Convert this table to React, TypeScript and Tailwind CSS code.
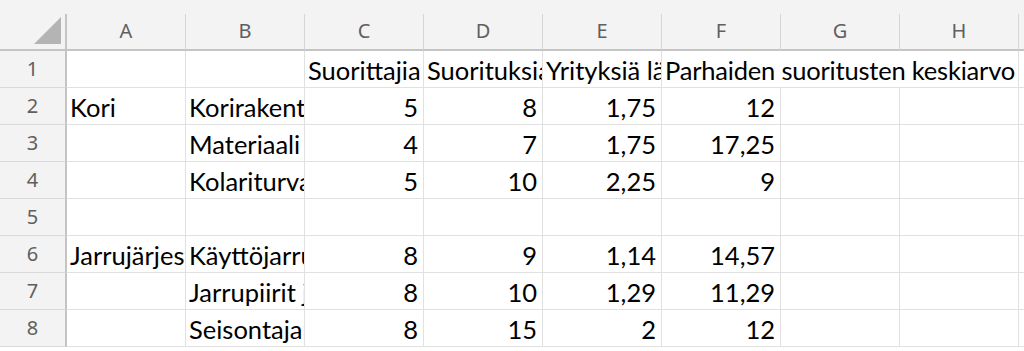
import React from "react";

type Cell = string | number;

const columns = ["A", "B", "C", "D", "E", "F", "G", "H"];

// Sheet contents, one array per row (columns A..F)
const rows: Cell[][] = [
  ["", "", "Suorittajia", "Suorituksia", "Yrityksiä läpäisyyn", "Parhaiden suoritusten keskiarvo"],
  ["Kori", "Korirakenteet", 5, 8, "1,75", 12],
  ["", "Materiaali ja pinnoitteet", 4, 7, "1,75", "17,25"],
  ["", "Kolariturvallisuus", 5, 10, "2,25", 9],
  [],
  ["Jarrujärjestelmät", "Käyttöjarrut", 8, 9, "1,14", "14,57"],
  ["", "Jarrupiirit ja jarruputket", 8, 10, "1,29", "11,29"],
  ["", "Seisontajarru", 8, 15, "2", 12],
];

const isNumeric = (v: Cell) => typeof v === "number" || /^[0-9]+(,[0-9]+)?$/.test(v);

const cellFont = { fontFamily: "Lato, 'Open Sans', sans-serif" };
const headFont = { fontFamily: "'Noto Sans', 'Open Sans', sans-serif" };

function DataCell({ value, span }: { value: Cell; span?: boolean }) {
  const numeric = value !== "" && isNumeric(value);
  return (
    <div
      className={`h-[37px] border-b border-r border-[#e1e1e1] bg-white overflow-hidden whitespace-nowrap flex items-end pb-[2px] text-[25.5px] leading-[30px] text-black ${
        numeric ? "justify-end pr-[5px]" : "justify-start pl-[3px]"
      } ${span ? "col-span-3 tracking-[-0.2px]" : ""}`}
      style={cellFont}
    >
      {value}
    </div>
  );
}

export default function App() {
  return (
    <div className="w-[1024px] h-[351px] overflow-hidden bg-white">
      {/* strip above the column headers */}
      <div className="h-[14px] bg-[#f3f3f3]" />
      <div className="grid grid-cols-[67px_repeat(8,119px)_1fr]">
        {/* select-all corner */}
        <div className="h-[37px] bg-[#f3f3f3] border-r-2 border-b-2 border-[#c4c4c4] flex items-end justify-end pr-[3px] pb-[4px]">
          <svg width="28" height="28" viewBox="0 0 28 28">
            <polygon points="27,0 27,27 0,27" fill="#b4b4b4" />
          </svg>
        </div>
        {columns.map((c) => (
          <div
            key={c}
            className="h-[37px] bg-[#f3f3f3] border-r border-r-[#d6d6d6] border-b-2 border-b-[#c4c4c4] flex items-center justify-center text-[20px] text-[#5f5f5f] pb-[2px]"
            style={headFont}
          >
            {c}
          </div>
        ))}
        <div className="h-[37px] bg-[#f3f3f3] border-b-2 border-[#c4c4c4]" />

        {rows.map((row, r) => {
          const cells: React.ReactNode[] = [];
          const spanF = r === 0;
          for (let c = 0; c < 8; c++) {
            if (spanF && c > 5) continue;
            cells.push(<DataCell key={c} value={row[c] ?? ""} span={spanF && c === 5} />);
          }
          return (
            <React.Fragment key={r}>
              <div
                className="h-[37px] bg-[#f3f3f3] border-r-2 border-r-[#c4c4c4] border-b border-b-[#d9d9d9] flex items-center justify-center text-[20px] text-[#5f5f5f]"
                style={headFont}
              >
                {r + 1}
              </div>
              {cells}
              <div className="h-[37px] border-b border-[#e1e1e1] bg-white" />
            </React.Fragment>
          );
        })}
      </div>
    </div>
  );
}
